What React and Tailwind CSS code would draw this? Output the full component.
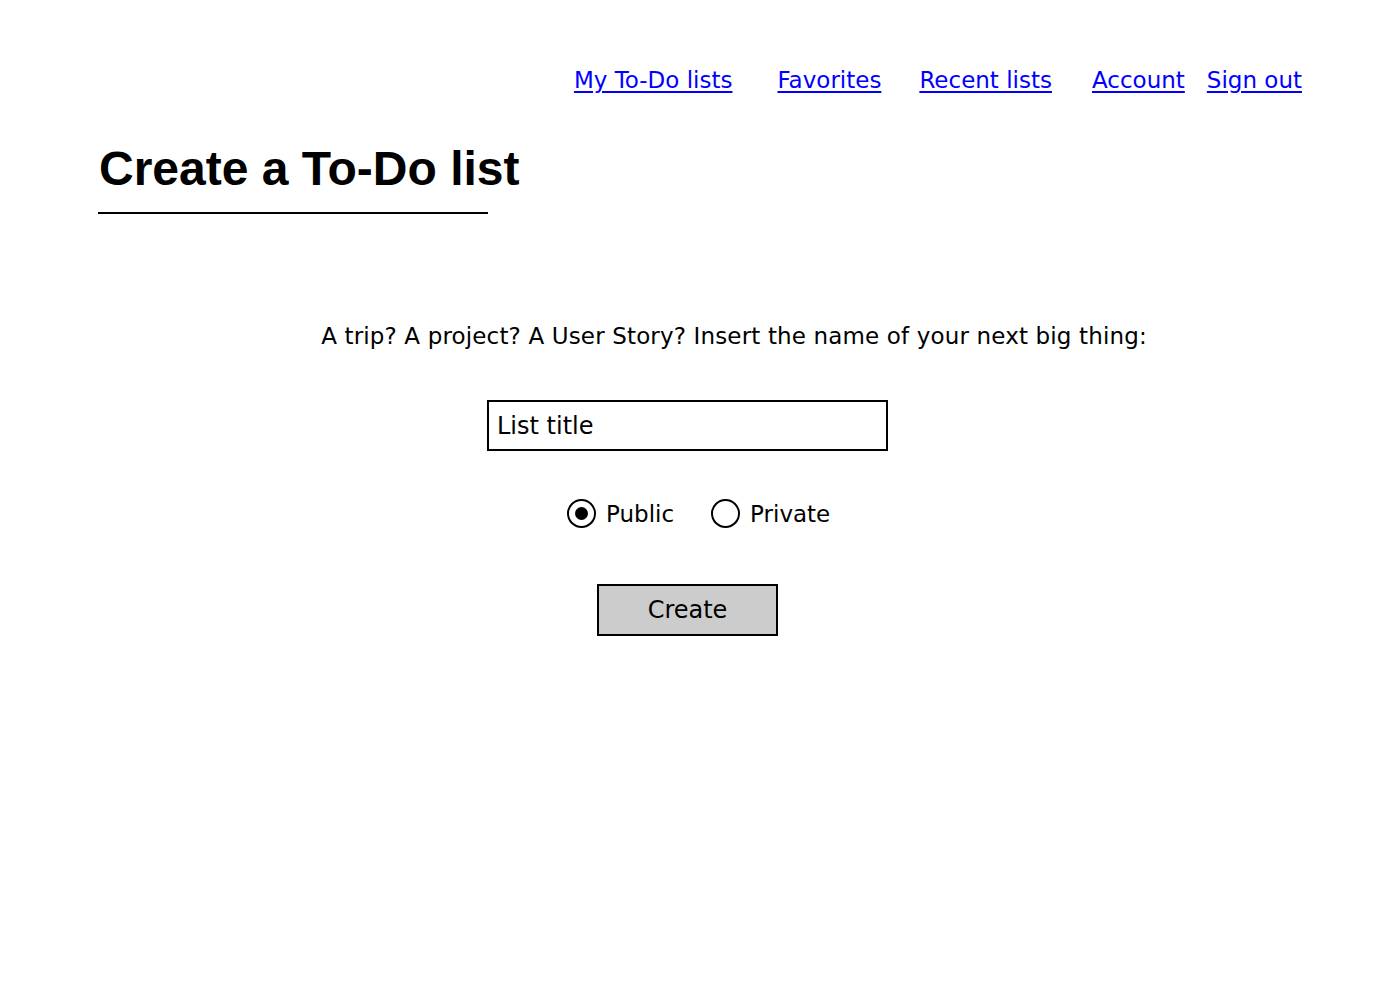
import React, { useState } from "react";

// wireframe-ish font: no Comic Sans offline, DejaVu Sans has close widths
const HAND = { fontFamily: "'Comic Sans MS', 'DejaVu Sans', sans-serif" };

const NAV_LINKS = [
  { label: "My To-Do lists", gap: "ml-0" },
  { label: "Favorites", gap: "ml-[45px]" },
  { label: "Recent lists", gap: "ml-[38px]" },
  { label: "Account", gap: "ml-[40px]" },
  { label: "Sign out", gap: "ml-[22px]" },
];

function Radio({ checked, label, onSelect }) {
  return (
    <button type="button" onClick={onSelect} className="flex items-center bg-transparent p-0">
      <span className="flex h-[29px] w-[29px] items-center justify-center rounded-full border-2 border-black">
        {checked && <span className="block h-[13px] w-[13px] rounded-full bg-black" />}
      </span>
      <span className="ml-[10px] text-[23px] leading-[28px] text-black">{label}</span>
    </button>
  );
}

export default function App() {
  const [visibility, setVisibility] = useState("public");
  const [title, setTitle] = useState("");

  return (
    <div className="min-h-[986px] bg-white text-black" style={HAND}>
      {/* top nav */}
      <nav className="flex justify-end pr-[90px] pt-[66px]">
        {NAV_LINKS.map((l) => (
          <a
            key={l.label}
            href="#"
            className={`${l.gap} text-[23px] leading-[28px] text-[#0000ff] underline underline-offset-[3px]`}
          >
            {l.label}
          </a>
        ))}
      </nav>

      {/* heading */}
      <div className="pl-[99px] pt-[51px]">
        <h1
          className="text-[48px] font-bold leading-[48px]"
          style={{ fontFamily: "'Liberation Sans', Arial, sans-serif" }}
        >
          Create a To-Do list
        </h1>
        <div className="ml-[-1px] mt-[19px] h-[2px] w-[390px] bg-black" />
      </div>

      {/* prompt */}
      <p className="mt-[108px] flex justify-center pl-[76px] text-[23px] leading-[28px] tracking-[0.15px]">
        A trip? A project? A User Story? Insert the name of your next big thing:
      </p>

      <div className="mt-[50px] pl-[487px]">
        <input
          value={title}
          onChange={(e) => setTitle(e.target.value)}
          placeholder="List title"
          className="h-[51px] w-[401px] border-2 border-black px-[8px] text-[24px] text-black outline-none placeholder:text-black"
          style={HAND}
        />
      </div>

      <div className="mt-[48px] flex pl-[567px]">
        <Radio checked={visibility === "public"} label="Public" onSelect={() => setVisibility("public")} />
        <div className="ml-[37px]">
          <Radio checked={visibility === "private"} label="Private" onSelect={() => setVisibility("private")} />
        </div>
      </div>

      <div className="mt-[56px] pl-[597px]">
        <button
          type="button"
          className="h-[52px] w-[181px] border-2 border-black bg-[#cccccc] text-[24px] text-black"
          style={HAND}
        >
          Create
        </button>
      </div>
    </div>
  );
}
